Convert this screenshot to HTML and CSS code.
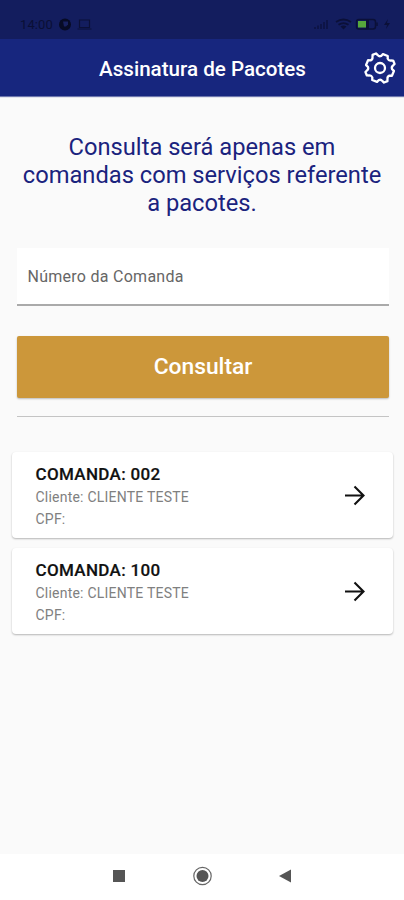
FILE: index.html
```html
<!DOCTYPE html>
<html lang="pt-BR">
<head>
<meta charset="utf-8">
<title>Assinatura de Pacotes</title>
<link rel="stylesheet" href="styles.css">
</head>
<body>
<div class="screen">
  <div class="status">
    <span class="clock">14:00</span>
    <svg class="status-left" width="34" height="14" viewBox="0 0 34 14">
      <circle cx="7" cy="7.500" r="6" fill="#070b25"/>
      <path d="M5 4.500h5v3l-2 2h-2z" fill="#18215f"/>
      <path d="M21.500 3h10v7.500h-10zM19.500 12h14" fill="none" stroke="#0b1038" stroke-width="1.200"/>
    </svg>
    <svg class="status-right" width="80" height="14" viewBox="0 0 80 14">
      <path d="M1 12V10M4 12V8.500M7 12V7M10 12V5M13 12V3" stroke="#0d1342" stroke-width="1.600"/>
      <path d="M22 5q7.500-5 15 0M24.500 7.800q5-3.500 10 0" fill="none" stroke="#0b1038" stroke-width="1.800"/>
      <path d="M26.500 9.500q3-2 6 0l-3 3z" fill="#0b1038"/>
      <rect x="42.500" y="2.500" width="19" height="9.500" rx="2.500" fill="none" stroke="#0b1038" stroke-width="1.500"/>
      <path d="M52 3h3v9h-3z" fill="#0b1038"/>
      <rect x="44" y="4" width="8" height="6.500" fill="#57a83c"/>
      <path d="M63 5.500v3.500" stroke="#0b1038" stroke-width="1.500"/>
      <path d="M74 2l-4 6h3l-1 4 4-6h-3z" fill="#0b1038"/>
    </svg>
  </div>
  <header class="bar">
    <h1>Assinatura de Pacotes</h1>
    <svg class="gear" width="32" height="32" viewBox="-16 -16 32 32" fill="none" stroke="#fff" stroke-width="2.300" stroke-linejoin="round">
      <path d="M-2.600-14H2.600L3.500-11.600Q5.200-10 7-11L9.300-11.900L11.900-9.300L11-7Q10 -5.200 11.600-3.500L14-2.600V2.600L11.600 3.500Q10 5.200 11 7L11.900 9.300L9.300 11.900L7 11Q5.200 10 3.500 11.600L2.600 14H-2.600L-3.500 11.600Q-5.200 10-7 11L-9.300 11.900L-11.900 9.300L-11 7Q-10 5.200-11.600 3.500L-14 2.600V-2.600L-11.600-3.500Q-10-5.200-11-7L-11.900-9.300L-9.300-11.900L-7-11Q-5.200-10-3.500-11.600Z" transform="rotate(22.5)"/>
      <circle r="5"/>
    </svg>
  </header>
  <main>
    <p class="intro">Consulta será apenas em<br>comandas com serviços referente<br>a pacotes.</p>
    <div class="field">Número da Comanda</div>
    <button class="submit">Consultar</button>
    <hr>
    <section class="cards">
      <article class="card">
        <div><h2>COMANDA: 002</h2><p>Cliente: CLIENTE TESTE</p><p>CPF:</p></div>
        <svg width="22" height="22" viewBox="0 0 22 22" fill="none" stroke="#111" stroke-width="2.100"><path d="M1 11.500H19.500M10.500 2.500L19.500 11.500L10.500 20.500"/></svg>
      </article>
      <article class="card">
        <div><h2>COMANDA: 100</h2><p>Cliente: CLIENTE TESTE</p><p>CPF:</p></div>
        <svg width="22" height="22" viewBox="0 0 22 22" fill="none" stroke="#111" stroke-width="2.100"><path d="M1 11.500H19.500M10.500 2.500L19.500 11.500L10.500 20.500"/></svg>
      </article>
    </section>
  </main>
  <nav class="nav">
    <svg width="20" height="20" viewBox="0 0 20 20"><path d="M5 4h12v12H5z" fill="#555"/></svg>
    <svg width="20" height="20" viewBox="0 0 20 20"><circle cx="10.500" cy="10" r="8.700" fill="none" stroke="#666" stroke-width="1.200"/><circle cx="10.500" cy="10" r="6" fill="#555"/></svg>
    <svg width="20" height="20" viewBox="0 0 20 20"><path d="M3 10L15 3.500V16.500Z" fill="#555"/></svg>
  </nav>
</div>
</body>
</html>
```
FILE: styles.css
```css
* { box-sizing: border-box; }
body { margin: 0; font-family: Roboto, "Liberation Sans", sans-serif; background: #fafafa; }
h1, h2, p { margin: 0; }
svg { display: block; flex: none; }
.screen { width: 404px; height: 900px; display: flex; flex-direction: column; }
.status { height: 39px; background: #131d5e; display: flex; align-items: flex-start; padding: 17px 10px 0 20px; }
.clock { width: 38px; font-size: 13px; line-height: 15px; letter-spacing: 0.1px; color: #0a0f35; }
.status-right { margin-left: auto; }
.bar { height: 57px; background: #17267e; display: flex; align-items: center; justify-content: flex-end; padding: 0 8px 0 0; box-shadow: 0 1px 1px #6d76ad; }
.bar h1 { flex: 1; padding: 2px 0 0 41px; text-align: center; color: #fff; font-size: 20.6px; font-weight: 500; line-height: 28px; white-space: nowrap; }
main { flex: 1; padding: 37px 12px 0 12px; }
.intro { text-align: center; color: #1a237e; font-size: 23.7px; line-height: 28px; white-space: nowrap; }
.field { margin: 31px 3px 0 5px; height: 58px; background: #fff; border-bottom: 2px solid #aaa; padding: 0 10.5px; font-size: 16px; line-height: 58px; letter-spacing: 0.27px; color: #666; }
.submit { display: block; width: 372px; height: 62px; margin: 30px 5px 0; border: 0; border-radius: 2px; background: #cc973a; color: #fff; font: 500 22.8px/62px Roboto, sans-serif; padding: 0; box-shadow: 0 1px 2px rgba(0,0,0,.25); }
hr { border: 0; height: 1px; background: #c4c4c4; margin: 18px 3px 0 5px; }
.cards { margin: 35px -1px 0 0; display: flex; flex-direction: column; gap: 10px; }
.card { height: 86px; background: #fff; border-radius: 4px; box-shadow: 0 1px 2px rgba(0,0,0,.28); display: flex; align-items: center; justify-content: space-between; padding: 0 27px 0 23.5px; }
.card > div { padding-top: 2px; }
.card h2 { font-size: 17px; font-weight: 500; line-height: 25px; letter-spacing: 0.33px; color: #111; -webkit-text-stroke: 0.2px #111; }
.card p { font-size: 14px; line-height: 21.5px; letter-spacing: 0.22px; color: #808080; }
.nav { height: 46px; background: #fff; display: flex; justify-content: center; gap: 64px; padding-top: 12px; }
```
